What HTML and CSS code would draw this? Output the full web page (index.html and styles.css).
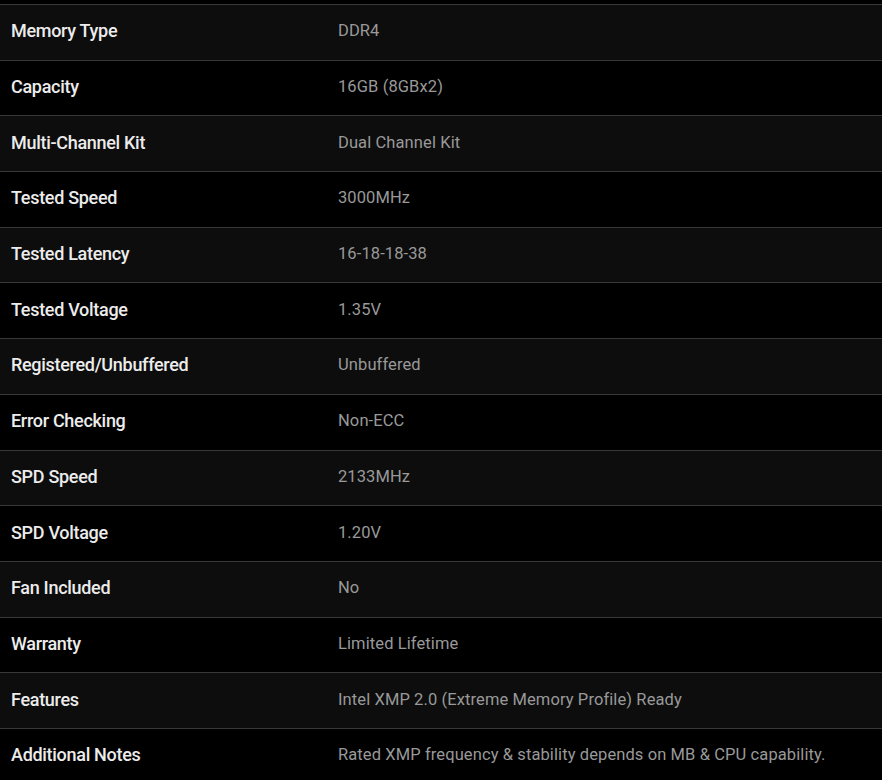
FILE: index.html
```html
<!DOCTYPE html>
<html lang="en">
<head>
<meta charset="utf-8">
<title>Specs</title>
<link rel="stylesheet" href="styles.css">
</head>
<body>
<div class="specs">
  <div class="row"><div class="label">Memory Type</div><div class="value">DDR4</div></div>
  <div class="row"><div class="label">Capacity</div><div class="value">16GB (8GBx2)</div></div>
  <div class="row"><div class="label">Multi-Channel Kit</div><div class="value">Dual Channel Kit</div></div>
  <div class="row"><div class="label">Tested Speed</div><div class="value">3000MHz</div></div>
  <div class="row"><div class="label">Tested Latency</div><div class="value">16-18-18-38</div></div>
  <div class="row"><div class="label">Tested Voltage</div><div class="value">1.35V</div></div>
  <div class="row"><div class="label">Registered/Unbuffered</div><div class="value">Unbuffered</div></div>
  <div class="row"><div class="label">Error Checking</div><div class="value">Non-ECC</div></div>
  <div class="row"><div class="label">SPD Speed</div><div class="value">2133MHz</div></div>
  <div class="row"><div class="label">SPD Voltage</div><div class="value">1.20V</div></div>
  <div class="row"><div class="label">Fan Included</div><div class="value">No</div></div>
  <div class="row"><div class="label">Warranty</div><div class="value">Limited Lifetime</div></div>
  <div class="row"><div class="label">Features</div><div class="value">Intel XMP 2.0 (Extreme Memory Profile) Ready</div></div>
  <div class="row"><div class="label">Additional Notes</div><div class="value">Rated XMP frequency &amp; stability depends on MB &amp; CPU capability.</div></div>
</div>
</body>
</html>
```
FILE: styles.css
```css
html, body {
  margin: 0;
  padding: 0;
  background: #000;
}
body {
  padding-top: 4px;
  font-family: Roboto, "Liberation Sans", sans-serif;
}
.specs {
  display: flex;
  flex-direction: column;
}
.row {
  display: grid;
  grid-template-columns: 338px 1fr;
  align-items: center;
  box-sizing: content-box;
  height: 51.7px;
  padding-bottom: 3px;
  border-top: 1px solid #383838;
}
.row:nth-child(odd) {
  background: #0d0d0d;
}
.row:nth-child(even) {
  background: #000;
}
.label {
  padding-left: 11px;
  color: #ececec;
  font-size: 18px;
  font-weight: 500;
  letter-spacing: -0.3px;
}
.value {
  color: #999;
  font-size: 16.5px;
  font-weight: 400;
  letter-spacing: 0.1px;
}
```
